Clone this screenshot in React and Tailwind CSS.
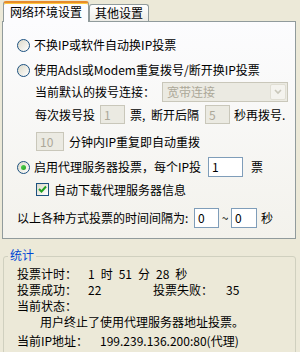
import React from 'react';

const Radio = ({ checked }) => (
  <span className="w-[13px] h-[13px] shrink-0 rounded-full border border-[#1c5180] bg-gradient-to-br from-[#dcd9c9] to-white flex items-center justify-center">
    {checked && <span className="w-[5px] h-[5px] rounded-full bg-gradient-to-br from-[#55d551] to-[#21a121]" />}
  </span>
);

const Checkbox = ({ checked }) => (
  <span className="w-[13px] h-[13px] shrink-0 border border-[#1c5180] bg-gradient-to-br from-[#dcd9c9] to-white flex items-center justify-center">
    {checked && (
      <svg width="9" height="9" viewBox="0 0 9 9">
        <path d="M1 4 L3.5 6.5 L8 1.5" fill="none" stroke="#21a121" strokeWidth="2" />
      </svg>
    )}
  </span>
);

const Input = ({ value, disabled, className = '' }) => (
  <span
    className={`h-full shrink-0 border flex items-center pl-[3px] ${
      disabled ? 'bg-[#ebeae2] border-[#c9c7ba] text-[#aca899]' : 'bg-white border-[#7f9db9] text-black'
    } ${className}`}
  >
    {value}
  </span>
);

export default function App() {
  return (
    <div className="w-[300px] h-[352px] bg-[#ece9d8] overflow-hidden text-[12px] leading-none text-black font-['Noto_Sans_CJK_SC',sans-serif]">
      {/* tabs */}
      <div className="flex items-end h-[21px] pl-[3px]">
        <div className="relative z-10 -mb-px h-[21px] w-[86px] bg-[#fcfcfe] border-x border-[#919b9c] border-t-2 border-t-[#e68b2c] rounded-t-[3px] shadow-[inset_0_1px_0_#ffc83c] flex items-center justify-center pb-[2px]">
          网络环境设置
        </div>
        <div className="h-[17px] w-[60px] bg-gradient-to-b from-white to-[#ecebe6] border border-b-0 border-[#919b9c] rounded-t-[3px] flex items-center justify-center pb-px">
          其他设置
        </div>
      </div>

      {/* panel */}
      <div className="ml-[2px] w-[294px] h-[218px] border border-[#919b9c] bg-gradient-to-b from-[#fcfcfe] to-[#f3f2ec] pl-[14px] flex flex-col">
        <div className="mt-[15px] h-[16px] flex items-center">
          <Radio />
          <span className="ml-[4px]">不换IP或软件自动换IP投票</span>
        </div>
        <div className="mt-[9px] h-[16px] flex items-center">
          <Radio />
          <span className="ml-[4px]">使用Adsl或Modem重复拨号/断开换IP投票</span>
        </div>
        <div className="mt-[4px] h-[20px] flex items-center pl-[18px]">
          <span className="w-[127px]">当前默认的拨号连接：</span>
          <span className="h-full w-[126px] border border-[#c9c7ba] bg-[#ebeae2] text-[#aca899] flex items-center pl-[4px]">
            <span className="flex-1">宽带连接</span>
            <span className="w-[16px] h-[16px] mr-px rounded-[2px] bg-[#f4f3ee] border border-[#e0ded3] flex items-center justify-center">
              <svg width="8" height="6" viewBox="0 0 8 6">
                <path d="M1 1 L4 4 L7 1" fill="none" stroke="#c9c7ba" strokeWidth="1.6" />
              </svg>
            </span>
          </span>
        </div>
        <div className="mt-[3px] h-[19px] flex items-center pl-[18px]">
          <span className="w-[65px]">每次拨号投</span>
          <Input value="1" disabled className="w-[25px]" />
          <span className="w-[26px] pl-[5px]">票,</span>
          <span className="w-[54px]">断开后隔</span>
          <Input value="5" disabled className="w-[25px]" />
          <span className="ml-[4px]">秒再拨号.</span>
        </div>
        <div className="mt-[8px] h-[19px] flex items-center pl-[19px]">
          <Input value="10" disabled className="w-[28px]" />
          <span className="ml-[5px]">分钟内IP重复即自动重拨</span>
        </div>
        <div className="mt-[6px] h-[20px] flex items-center">
          <Radio checked />
          <span className="ml-[4px] w-[174px]">启用代理服务器投票，每个IP投</span>
          <Input value="1" className="w-[35px]" />
          <span className="ml-[8px]">票</span>
        </div>
        <div className="mt-[6px] h-[13px] flex items-center pl-[19px]">
          <Checkbox checked />
          <span className="ml-[5px]">自动下载代理服务器信息</span>
        </div>
        <div className="mt-[12px] h-[20px] flex items-center">
          <span className="w-[177px]">以上各种方式投票的时间间隔为:</span>
          <Input value="0" className="w-[25px]" />
          <span className="w-[12px] text-center">~</span>
          <Input value="0" className="w-[26px]" />
          <span className="ml-[4px]">秒</span>
        </div>
      </div>

      {/* stats group */}
      <div className="relative mt-[17px] ml-[3px] w-[293px] h-[110px] border border-[#d0d0bf] rounded-[3px] pl-[13px] pt-[9px] flex flex-col">
        <span className="absolute left-[4px] -top-[8px] px-[2px] bg-[#ece9d8] text-[#0046d5]">统计</span>
        <div className="h-[16px] flex items-center">
          <span className="w-[71px]">投票计时：</span>
          <span className="flex items-center gap-[6px]">
            <span>1</span>
            <span>时</span>
            <span>51</span>
            <span>分</span>
            <span>28</span>
            <span>秒</span>
          </span>
        </div>
        <div className="h-[16px] flex items-center">
          <span className="w-[71px]">投票成功：</span>
          <span className="w-[65px]">22</span>
          <span className="w-[73px]">投票失败：</span>
          <span>35</span>
        </div>
        <div className="h-[16px] flex items-center">当前状态：</div>
        <div className="h-[16px] flex items-center pl-[23px]">用户终止了使用代理服务器地址投票。</div>
        <div className="mt-[3px] h-[16px] flex items-center">
          <span className="w-[83px]">当前IP地址：</span>
          <span>199.239.136.200:80(代理)</span>
        </div>
      </div>
    </div>
  );
}
